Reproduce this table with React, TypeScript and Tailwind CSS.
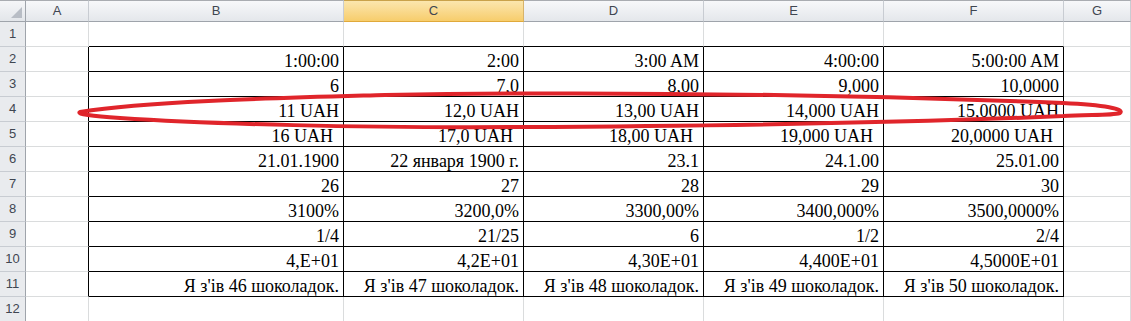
import React from "react";

const colLetters = ["A", "B", "C", "D", "E", "F", "G"];

const data: string[][] = [
  ["1:00:00", "2:00", "3:00 AM", "4:00:00", "5:00:00 AM"],
  ["6", "7,0", "8,00", "9,000", "10,0000"],
  ["11 UAH", "12,0 UAH", "13,00 UAH", "14,000 UAH", "15,0000 UAH"],
  ["16 UAH", "17,0 UAH", "18,00 UAH", "19,000 UAH", "20,0000 UAH"],
  ["21.01.1900", "22 января 1900 г.", "23.1", "24.1.00", "25.01.00"],
  ["26", "27", "28", "29", "30"],
  ["3100%", "3200,0%", "3300,00%", "3400,000%", "3500,0000%"],
  ["1/4", "21/25", "6", "1/2", "2/4"],
  ["4,E+01", "4,2E+01", "4,30E+01", "4,400E+01", "4,5000E+01"],
  [
    "Я з'ів 46 шоколадок.",
    "Я з'ів 47 шоколадок.",
    "Я з'ів 48 шоколадок.",
    "Я з'ів 49 шоколадок.",
    "Я з'ів 50 шоколадок.",
  ],
];

function Cell({ row, col }: { row: number; col: number }) {
  // col: 0 = A ... 6 = G ; row: 1..12
  const inTable = row >= 2 && row <= 11;
  const isDataCol = col >= 1 && col <= 5;
  const blackRight = inTable && col >= 0 && col <= 5;
  const blackBottom = isDataCol && row >= 1 && row <= 11;
  const text = inTable && isDataCol ? data[row - 2][col - 1] : "";
  const padRight = row === 5 ? "pr-[10px]" : "pr-[4px]";
  return (
    <div
      className={
        "h-[25px] flex items-end justify-end overflow-visible whitespace-nowrap border-r border-b " +
        (blackRight ? "border-r-black " : "border-r-[#dadcdd] ") +
        (blackBottom ? "border-b-black " : "border-b-[#dadcdd] ") +
        padRight
      }
    >
      <span className="text-[18px] leading-[20px] text-black [font-family:'Liberation_Serif','Times_New_Roman',serif]">
        {text}
      </span>
    </div>
  );
}

export default function App() {
  const rows = Array.from({ length: 12 }, (_, i) => i + 1);
  return (
    <div className="relative w-[1131px] h-[321px] overflow-hidden bg-white">
      <div className="grid grid-cols-[26px_63px_255px_180px_180px_180px_180px_67px] [font-family:'Liberation_Sans',Arial,sans-serif]">
        {/* header row */}
        <div className="h-[22px] relative border-t border-t-[#a9acb1] border-r border-r-[#9fa4ab] border-b border-b-[#9fa4ab] bg-linear-to-b from-[#f5f6f8] to-[#e3e6ea]">
          <div className="absolute right-[3px] bottom-[3px] w-0 h-0 border-l-[11px] border-l-transparent border-b-[11px] border-b-[#b8bdc5]" />
        </div>
        {colLetters.map((c) => (
          <div
            key={c}
            className={
              "h-[22px] flex items-center justify-center text-[13px] text-[#3f4651] border-t border-r border-b " +
              (c === "C"
                ? "border-t-[#c9a24a] border-r-[#d7b36a] border-b-[#e0a93b] bg-linear-to-b from-[#fbe6ad] to-[#f7cd6b]"
                : "border-t-[#a9acb1] border-r-[#c8ccd2] border-b-[#9fa4ab] bg-linear-to-b from-[#f7f8fa] to-[#e4e7eb]")
            }
          >
            <span className="pb-[1px]">{c}</span>
          </div>
        ))}
        {rows.map((r) => (
          <React.Fragment key={r}>
            <div className="h-[25px] flex items-center justify-center text-[13px] text-[#3f4651] bg-[#e9ebee] border-r border-r-[#9fa4ab] border-b border-b-[#c8ccd2]">
              {r}
            </div>
            {colLetters.map((_, ci) => (
              <Cell key={ci} row={r} col={ci} />
            ))}
          </React.Fragment>
        ))}
      </div>
      <svg
        className="absolute inset-0 pointer-events-none"
        width="1131"
        height="321"
        viewBox="0 0 1131 321"
      >
        <path
          d="M 80 112 C 150 101, 280 98, 385 95 C 560 92, 800 93, 1063 103 C 1105 105, 1125 109, 1120 113 C 1110 116, 1085 114, 1063 116 C 900 123, 720 126, 520 127 C 360 128, 210 124, 120 118 C 92 116, 76 114, 80 112 Z"
          fill="none"
          stroke="#e0252b"
          strokeWidth="4"
          strokeLinejoin="round"
        />
      </svg>
    </div>
  );
}
